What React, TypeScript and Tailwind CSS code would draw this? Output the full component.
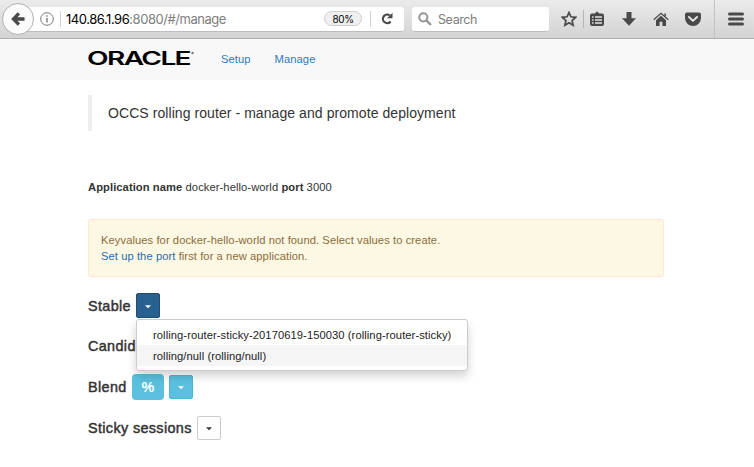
import type { ReactNode } from "react";

function Caret() {
  return (
    <svg width="6" height="4" viewBox="0 0 6 4" className="mt-[2px]">
      <path d="M0 .3h6L3 3.3z" fill="currentColor" />
    </svg>
  );
}

function Label({ children }: { children: ReactNode }) {
  return (
    <span className="block pt-px text-[14.4px] tracking-[0.36px] [-webkit-text-stroke:0.45px_#333]">{children}</span>
  );
}

function Toolbar() {
  return (
    <header className="flex h-[39px] items-center border-b border-[#b0b0b0] bg-linear-to-b from-[#ebebeb] to-[#d3d3d3] font-['Inter',sans-serif] text-[#4a4a4a]">
      <div className="z-10 ml-[2px] flex h-8 w-8 shrink-0 items-center justify-center rounded-full border border-[#b1b1b1] bg-[#fbfbfb]">
        <svg width="14" height="14" viewBox="0 0 16 16" fill="none" stroke="currentColor" strokeWidth="3.8">
          <path d="M9 1.500 2.800 8 9 14.500M3 8h12.500" />
        </svg>
      </div>
      <div className="-ml-4 flex h-[25px] w-[386px] shrink-0 items-center rounded-r-[3px] border-b border-[#bcbcbc] bg-white pl-[22px]">
        <svg width="14" height="14" viewBox="0 0 14 14" fill="none" stroke="#777" strokeWidth="1">
          <circle cx="7" cy="7" r="6.300" />
          <path d="M7 6v4.500M7 3.300v1.500" strokeWidth="1.400" />
        </svg>
        <span className="ml-1.5 h-4 w-px bg-[#d0d0d0]" />
        <span className="ml-[5px] w-[258px] text-[13px] tracking-[-0.46px] text-[#808080]">
          <span className="text-black">140.86.1.96</span>:8080/#/manage
        </span>
        <span className="flex h-[15px] w-[38px] shrink-0 items-center justify-center rounded-full border border-[#cfcfcf] bg-[#f0f0f0] text-[10px] tracking-[-0.4px] text-black">80%</span>
        <span className="ml-2 h-4 w-px bg-[#d0d0d0]" />
        <svg className="ml-2.5" width="12" height="13" viewBox="0 0 12 13">
          <path d="M9.600 9.500A4.300 4.300 0 1 1 8.800 3.400" fill="none" stroke="currentColor" strokeWidth="2.200" />
          <path d="M11.500.8v5.400H6z" fill="currentColor" />
        </svg>
      </div>
      <div className="ml-2 flex h-[25px] w-[137px] shrink-0 items-center rounded-[3px] border-b border-[#bcbcbc] bg-white pl-[6px]">
        <svg width="14" height="14" viewBox="0 0 14 14" fill="none" stroke="#969696" strokeWidth="2">
          <circle cx="5.300" cy="5.300" r="4.100" />
          <path d="m8.300 8.300 4.700 4.700" strokeWidth="2.400" />
        </svg>
        <span className="ml-[6px] pt-[2px] text-[12.5px] tracking-[-0.4px] text-[#7c7c7c]">Search</span>
      </div>
      <svg className="ml-[12px] shrink-0" width="16" height="16" viewBox="0 0 16 16">
        <path d="m8 1.500 1.900 4.300 4.700.5-3.500 3.200 1 4.700L8 11.800l-4.100 2.400 1-4.700-3.500-3.200 4.700-.5z" fill="none" stroke="currentColor" strokeWidth="1.700" />
      </svg>
      <span className="ml-[6px] h-[18px] w-px bg-[#b5b5b5]" />
      <svg className="ml-[6px] shrink-0" width="14" height="16" viewBox="0 0 14 16">
        <path d="M2 2.500h2.600L7 .5l2.400 2H12a2 2 0 0 1 2 2V13a2 2 0 0 1-2 2H2a2 2 0 0 1-2-2V4.500a2 2 0 0 1 2-2z" fill="currentColor" />
        <path d="M2 6h1.500M5 6h7M2 9h1.500M5 9h7M2 12h1.500M5 12h7" stroke="#e2e2e2" strokeWidth="1.500" />
      </svg>
      <svg className="ml-[18px] shrink-0" width="14" height="14" viewBox="0 0 14 14">
        <path d="M4.500 0h5v6.300H14L7 13.700 0 6.300h4.500z" fill="currentColor" />
      </svg>
      <svg className="ml-[17px] shrink-0" width="16" height="15" viewBox="0 0 16 15">
        <path d="M.7 7.800 8 1.300l7.300 6.500" fill="none" stroke="currentColor" strokeWidth="1.300" />
        <path d="M8 3.700 13 8.200V14H9.400V9.800H6.600V14H3V8.200z" fill="currentColor" />
        <path d="M11.300 1.500h1.600v3.200l-1.600-1.300z" fill="currentColor" />
      </svg>
      <svg className="ml-[16px] shrink-0" width="16" height="15" viewBox="0 0 16 15">
        <path d="M2 .5h12a2 2 0 0 1 2 2V6A8 8 0 0 1 0 6V2.500a2 2 0 0 1 2-2z" fill="currentColor" />
        <path d="m4 5 4 3.900L12 5" fill="none" stroke="#e4e4e4" strokeWidth="2" strokeLinecap="round" strokeLinejoin="round" />
      </svg>
      <span className="ml-[13px] h-[38px] w-px bg-[#c2c2c2]" />
      <svg className="ml-[13px] shrink-0" width="16" height="14" viewBox="0 0 16 14">
        <path d="M1.500 2h13M1.500 7h13M1.500 12h13" stroke="currentColor" strokeWidth="3" strokeLinecap="round" />
      </svg>
    </header>
  );
}

export default function App() {
  return (
    <div className="h-[467px] w-[754px] overflow-hidden bg-white font-['Liberation_Sans',Arial,sans-serif] text-[11.2px] leading-4 tracking-[0.07px] text-[#333]">
      <Toolbar />
      <nav className="flex h-[41px] items-center bg-[#f8f8f8] pl-[87px] text-[#337ab7]">
        <svg width="108" height="24" viewBox="0 0 108 24" className="mb-[2px] overflow-visible" fill="#000">
          <text x="0" y="18.2" textLength="103" lengthAdjust="spacingAndGlyphs" fontFamily="Inter, sans-serif" fontSize="19" fontWeight="560" letterSpacing="-1.1">ORACLE</text>
          <circle cx="105.500" cy="6" r="1.200" fill="#777" />
        </svg>
        <a className="mb-px ml-[26px]">Setup</a>
        <a className="mb-px ml-6">Manage</a>
      </nav>
      <main className="ml-[88px] w-[576px]">
        <blockquote className="mt-[15px] flex h-9 items-center border-l-4 border-[#eee] pl-4 text-[14px]">
          OCCS rolling router - manage and promote deployment
        </blockquote>
        <p className="mt-[48px]">
          <b>Application name</b> docker-hello-world <b>port</b> 3000
        </p>
        <div className="mt-6 h-[58px] rounded-[3px] border border-[#faebcc] bg-[#fcf8e3] px-3 pt-3 text-[#8a6d3b]">
          <p>Keyvalues for docker-hello-world not found. Select values to create.</p>
          <p><a className="text-[#2a6cb0]">Set up the port</a> first for a new application.</p>
        </div>
        <section className="mt-[8px]">
          <div className="relative flex h-[41px] items-center">
            <Label>Stable</Label>
            <button className="ml-auto mr-[504px] flex h-[25px] w-6 items-center justify-center rounded-[2px] border border-[#204d74] bg-[#286090] text-white"><Caret /></button>
            <ul className="absolute left-[48px] top-[34px] z-20 w-[332px] rounded-[3px] border border-[#ccc] bg-white py-1 leading-[23px] text-[#222] shadow-[0_5px_10px_rgba(0,0,0,0.18)]">
              <li className="h-[21px] pl-4">rolling-router-sticky-20170619-150030 (rolling-router-sticky)</li>
              <li className="h-[21px] bg-[#f5f5f5] pl-4">rolling/null (rolling/null)</li>
            </ul>
          </div>
          <div className="flex h-10 items-center pb-[2px]"><Label>Candidate</Label></div>
          <div className="flex h-[41px] items-center">
            <div className="w-11"><Label>Blend</Label></div>
            <button className="flex h-[26px] w-8 items-center justify-center rounded-[4px] bg-[#5bc0de] text-[14.4px] font-bold text-white">%</button>
            <button className="ml-[5px] flex h-6 w-6 items-center justify-center rounded-[2px] border border-[#46b8da] bg-[#5bc0de] text-white"><Caret /></button>
          </div>
          <div className="flex h-[41px] items-center">
            <div className="w-[109px]"><Label>Sticky sessions</Label></div>
            <button className="flex h-6 w-6 items-center justify-center rounded-[2px] border border-[#ccc] bg-white"><Caret /></button>
          </div>
        </section>
      </main>
    </div>
  );
}
